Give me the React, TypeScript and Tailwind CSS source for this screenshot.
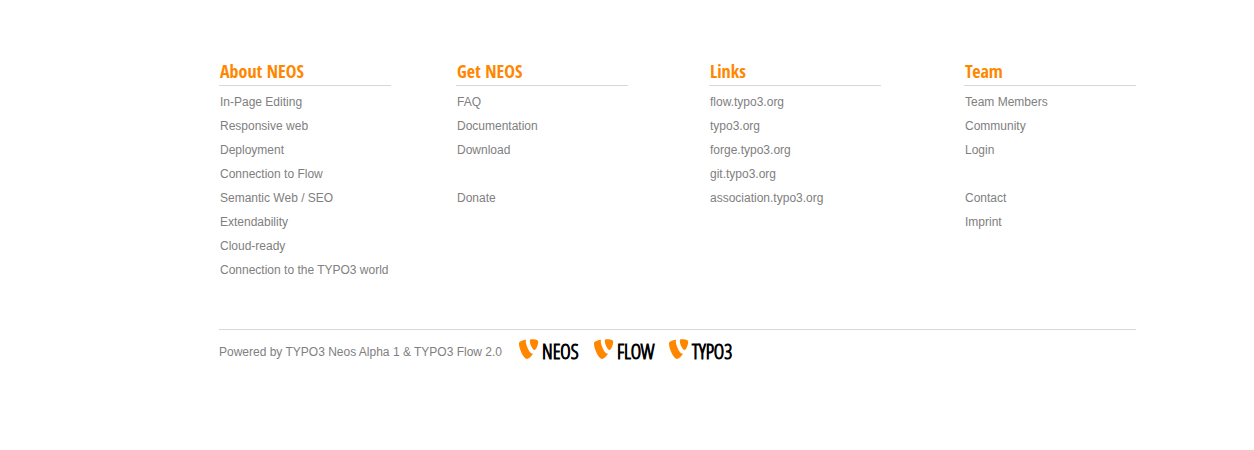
type Item = string | null;

const columns: { title: string; items: Item[] }[] = [
  {
    title: 'About NEOS',
    items: [
      'In-Page Editing',
      'Responsive web',
      'Deployment',
      'Connection to Flow',
      'Semantic Web / SEO',
      'Extendability',
      'Cloud-ready',
      'Connection to the TYPO3 world',
    ],
  },
  { title: 'Get NEOS', items: ['FAQ', 'Documentation', 'Download', null, 'Donate'] },
  {
    title: 'Links',
    items: ['flow.typo3.org', 'typo3.org', 'forge.typo3.org', 'git.typo3.org', 'association.typo3.org'],
  },
  { title: 'Team', items: ['Team Members', 'Community', 'Login', null, 'Contact', 'Imprint'] },
];

const logos = ['NEOS', 'FLOW', 'TYPO3'];

function Shield() {
  return (
    <svg viewBox="0 0 20 21" className="h-[21px] w-5 shrink-0" fill="#ff8700" aria-hidden="true">
      <path d="M14.2 14.6c-.3.1-.6.1-.9.1C10.500 14.700 6.800 5.500 6.800 2.500c0-1 .2-1.500.6-1.800C4.300 1 .9 2 .3 3.300 0 3.700 0 4.300 0 5 0 9.600 4.600 20 8 20c1.600 0 4.100-2 6.200-5.400" />
      <path d="M12.500.300c3.200 0 6.700.4 6.700 2.300 0 3.700-2.100 8.400-3.500 8.400-2.200 0-4.900-5.900-4.900-8.900 0-1.300.4-1.800 1.700-1.800" />
    </svg>
  );
}

export default function App() {
  return (
    <footer className="min-h-screen bg-white pt-[59px] pr-6 pb-16 pl-[219px] font-['Liberation_Sans',Arial,sans-serif] text-xs leading-6 text-[#808080]">
      <div className="max-w-[917px]">
        <nav className="grid grid-cols-[237fr_253fr_255fr_172fr]">
          {columns.map((column) => (
            <section key={column.title}>
              <h2 className="w-[172px] border-b border-[#d8d8d8] pb-0.5 pl-px font-['Open_Sans_Condensed','Liberation_Sans_Narrow','Roboto_Condensed',sans-serif] text-lg leading-6 font-bold text-[#ff8700]">
                {column.title}
              </h2>
              <ul className="pt-1 pl-px">
                {column.items.map((item, index) => (
                  <li key={index} className="h-6 whitespace-nowrap">
                    {item && <a href="#">{item}</a>}
                  </li>
                ))}
              </ul>
            </section>
          ))}
        </nav>
        <div className="mt-[47px] flex items-start border-t border-[#d8d8d8]">
          <p className="w-[300px] shrink-0 pt-2.5 whitespace-nowrap">
            Powered by TYPO3 Neos Alpha 1 &amp; TYPO3 Flow 2.0
          </p>
          <ul className="flex pt-[9px]">
            {logos.map((name) => (
              <li key={name} className="w-[75px] shrink-0">
                <a href="#" className="flex items-start gap-[3px] whitespace-nowrap text-black">
                  <Shield />
                  <span className="font-['Open_Sans_Condensed_Light','Roboto_Condensed','Liberation_Sans_Narrow',sans-serif] text-xl leading-[26px] font-light [-webkit-text-stroke:1px_black]">
                    {name}
                  </span>
                </a>
              </li>
            ))}
          </ul>
        </div>
      </div>
    </footer>
  );
}
